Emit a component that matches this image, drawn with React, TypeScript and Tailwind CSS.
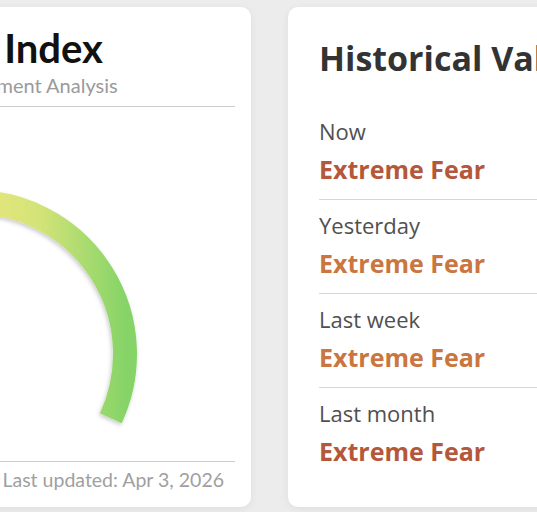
const history = [
  { label: 'Now', value: 'Extreme Fear', tone: 'text-[#b4573b]' },
  { label: 'Yesterday', value: 'Extreme Fear', tone: 'text-[#c97641]' },
  { label: 'Last week', value: 'Extreme Fear', tone: 'text-[#c97641]' },
  { label: 'Last month', value: 'Extreme Fear', tone: 'text-[#b4573b]' },
];

function Gauge() {
  // arc centred in the card, 230deg sweep over the top
  const cx = 262;
  const cy = 247;
  const r = 152;
  const a = (25 * Math.PI) / 180;
  const x0 = cx - r * Math.cos(a);
  const x1 = cx + r * Math.cos(a);
  const y = cy + r * Math.sin(a);
  return (
    <svg viewBox="0 0 524 352" className="block w-[524px] h-[352px]">
      <defs>
        <linearGradient id="fg" gradientUnits="userSpaceOnUse" x1="110" y1="0" x2="414" y2="0">
          <stop offset="0" stopColor="#e0563f" />
          <stop offset="0.25" stopColor="#eb9a55" />
          <stop offset="0.5" stopColor="#eae77c" />
          <stop offset="0.72" stopColor="#d3e378" />
          <stop offset="1" stopColor="#86d468" />
        </linearGradient>
        <filter id="sh" x="-20%" y="-20%" width="140%" height="140%">
          <feDropShadow dx="-1" dy="2" stdDeviation="2" floodColor="#000" floodOpacity="0.22" />
        </filter>
      </defs>
      <path
        d={`M ${x0} ${y} A ${r} ${r} 0 1 1 ${x1} ${y}`}
        fill="none"
        stroke="url(#fg)"
        strokeWidth={24}
        filter="url(#sh)"
      />
    </svg>
  );
}

export default function App() {
  return (
    <div className="w-[537px] h-[512px] overflow-hidden bg-[#ececec]">
      <div className="flex items-start gap-[37px] pt-[7px]">
        <div className="ml-[-305px] w-[556px] h-[500px] shrink-0 flex flex-col rounded-[10px] bg-white px-4 pt-[17px] pb-[16px] shadow-[0_2px_8px_rgba(0,0,0,0.06)] font-['Lato',sans-serif]">
          <h1 className="pr-[82px] text-center text-[40px] leading-[1.2] font-bold text-[#111] whitespace-nowrap">
            Fear &amp; Greed Index
          </h1>
          <p className="mt-[1px] pr-[10px] text-center text-[20px] leading-[1.2] text-[#9a9a9a] whitespace-nowrap">
            Crypto Market Sentiment Analysis
          </p>
          <div className="mt-[9px] border-b border-[#cccccc]" />
          <div className="flex-1 flex justify-center">
            <Gauge />
          </div>
          <div className="border-b border-[#cccccc]" />
          <p className="mt-[6px] pr-[11px] text-right text-[19.5px] leading-[1.2] text-[#a0a0a0]">
            Last updated: Apr 3, 2026
          </p>
        </div>
        <div className="w-[520px] h-[500px] shrink-0 rounded-[10px] bg-white pl-[31px] pt-[30px] shadow-[0_2px_8px_rgba(0,0,0,0.06)] font-['Open_Sans',sans-serif]">
          <h2 className="text-[34px] leading-[42px] font-bold text-[#333] whitespace-nowrap">
            Historical Values
          </h2>
          <div className="mt-[27px] flex flex-col">
            {history.map((h, i) => (
              <div
                key={h.label}
                className={
                  i < history.length - 1
                    ? 'pt-[10px] pb-[13px] border-b border-[#d6d6d6]'
                    : 'pt-[10px]'
                }
              >
                <p className="text-[22px] leading-[30px] text-[#505050]">{h.label}</p>
                <p className={`mt-[6px] text-[25px] leading-[34px] font-bold ${h.tone}`}>
                  {h.value}
                </p>
              </div>
            ))}
          </div>
        </div>
      </div>
    </div>
  );
}
